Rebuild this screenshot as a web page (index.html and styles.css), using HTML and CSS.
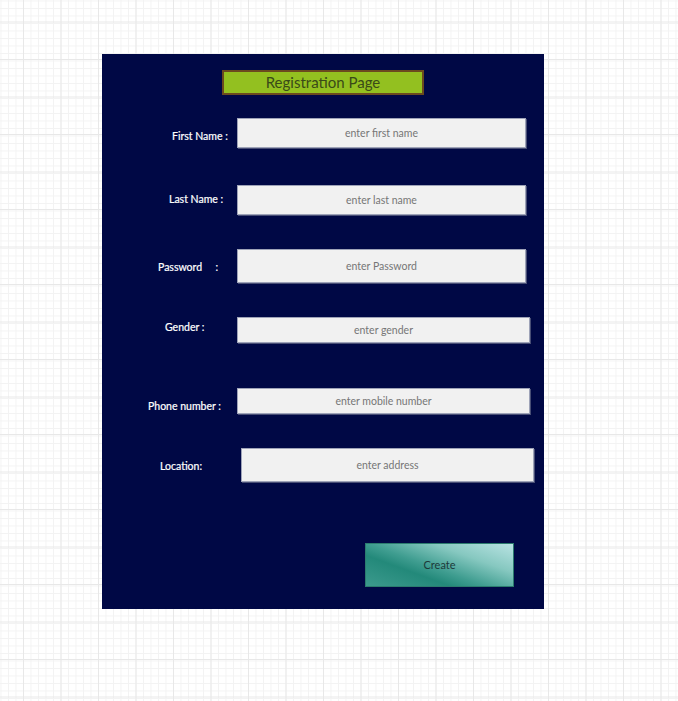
FILE: index.html
```html
<!DOCTYPE html>
<html>
<head>
<meta charset="utf-8">
<title>Registration Page</title>
<link rel="stylesheet" href="styles.css">
</head>
<body>
<div class="canvas">
  <form class="panel">
    <div class="title">Registration Page</div>

    <div class="row row-first">
      <label class="label lbl-first">First Name :</label>
      <input class="field f-first" type="text" placeholder="enter first name">
    </div>

    <div class="row row-last">
      <label class="label lbl-last">Last Name :</label>
      <input class="field f-last" type="text" placeholder="enter last name">
    </div>

    <div class="row row-pass">
      <label class="label lbl-pass">Password&nbsp;&nbsp;&nbsp;&nbsp;&nbsp;:</label>
      <input class="field f-pass" type="text" placeholder="enter Password">
    </div>

    <div class="row row-gender">
      <label class="label lbl-gender">Gender :</label>
      <input class="field f-gender" type="text" placeholder="enter gender">
    </div>

    <div class="row row-phone">
      <label class="label lbl-phone">Phone number :</label>
      <input class="field f-phone" type="text" placeholder="enter mobile number">
    </div>

    <div class="row row-loc">
      <label class="label lbl-loc">Location:</label>
      <input class="field f-loc" type="text" placeholder="enter address">
    </div>

    <div class="actions">
      <button class="create" type="button">Create</button>
    </div>
  </form>
</div>
</body>
</html>
```

FILE: styles.css
```css
html, body {
  margin: 0;
  padding: 0;
}

body {
  width: 678px;
  min-height: 701px;
  font-family: Lato, "Liberation Sans", sans-serif;
  background-color: #ffffff;
  background-image:
    linear-gradient(to right, #e8e8e8 1px, transparent 1px),
    linear-gradient(to bottom, #e8e8e8 1px, transparent 1px),
    linear-gradient(to right, #f3f3f3 1px, transparent 1px),
    linear-gradient(to bottom, #f3f3f3 1px, transparent 1px);
  background-size: 37.5px 37.5px, 37.5px 37.5px, 7.5px 7.5px, 7.5px 7.5px;
  background-position: 23px 0, 0 21.5px, 0.5px 0, 0 0.5px;
}

.canvas {
  padding: 54px 0 92px 102px;
}

.panel {
  box-sizing: border-box;
  width: 442px;
  height: 555px;
  padding-top: 16px;
  background: #000845;
  display: flex;
  flex-direction: column;
  margin: 0;
}

.title {
  box-sizing: border-box;
  width: 202px;
  height: 25px;
  margin-left: 120px;
  border: 2px solid #6b4a1e;
  background: #93c020;
  color: #3a4a18;
  font-size: 15px;
  line-height: 21px;
  text-align: center;
}

.row {
  display: flex;
  align-items: flex-start;
}

.row-first  { margin-top: 23px; }
.row-last   { margin-top: 37px; }
.row-pass   { margin-top: 34px; }
.row-gender { margin-top: 34px; }
.row-phone  { margin-top: 45px; }
.row-loc    { margin-top: 34px; }

.label {
  box-sizing: border-box;
  width: 135px;
  flex: none;
  color: #ffffff;
  font-size: 10.5px;
  line-height: 14px;
  white-space: pre;
  -webkit-text-stroke: 0.2px #ffffff;
}

.lbl-first  { padding-left: 70px; margin-top: 11px; }
.lbl-last   { padding-left: 67px; margin-top: 7px; }
.lbl-pass   { padding-left: 56px; margin-top: 11px; }
.lbl-gender { padding-left: 63px; margin-top: 3px; }
.lbl-phone  { padding-left: 46px; margin-top: 11px; }
.lbl-loc    { padding-left: 58px; margin-top: 11px; width: 139px; }

.field {
  box-sizing: border-box;
  margin: 0;
  padding: 0;
  border: 1px solid #9ea3b8;
  box-shadow: 1px 1px 0 rgba(120, 125, 150, 0.6);
  background: #f1f1f1;
  font-family: Lato, "Liberation Sans", sans-serif;
  font-size: 10.5px;
  color: #555;
  text-align: center;
  outline: none;
}

.field::placeholder {
  color: #767676;
  opacity: 1;
}

.f-first  { width: 289px; height: 30px; padding-bottom: 1px; }
.f-last   { width: 289px; height: 30px; }
.f-pass   { width: 289px; height: 34px; }
.f-gender { width: 293px; height: 26px; }
.f-phone  { width: 293px; height: 26px; }
.f-loc    { width: 293px; height: 34px; }

.actions {
  display: flex;
  margin-top: 61px;
  padding-left: 263px;
}

.create {
  box-sizing: border-box;
  width: 149px;
  height: 44px;
  margin: 0;
  border: 1px solid #2b7c6e;
  background: linear-gradient(200deg, #b9e3e3 0%, #86c8c0 30%, #3f9d90 55%, #23897a 68%, #3c9a8d 100%);
  color: #1d3a3a;
  font-family: Lato, "Liberation Sans", sans-serif;
  font-size: 11px;
  padding: 0 0 2px 0;
  cursor: pointer;
}
```
